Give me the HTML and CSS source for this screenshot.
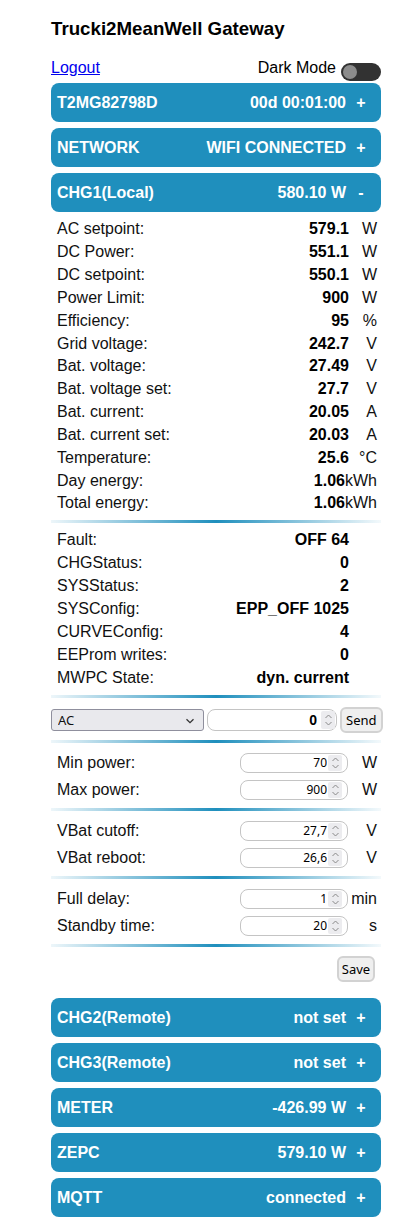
FILE: index.html
```html
<!DOCTYPE html>
<html lang="en">
<head>
<meta charset="utf-8">
<title>Trucki2MeanWell Gateway</title>
<link rel="stylesheet" href="styles.css">
</head>
<body>
<div class="page">
  <h1 class="title">Trucki2MeanWell Gateway</h1>
  <div class="header">
    <a class="logout" href="#">Logout</a>
    <div class="mode">
      <span class="mode-label">Dark Mode</span>
      <span class="toggle"><span class="knob"></span></span>
    </div>
  </div>

  <div class="bar"><span class="bar-title">T2MG82798D</span><span class="bar-value">00d 00:01:00</span><span class="bar-sign">+</span></div>
  <div class="bar"><span class="bar-title">NETWORK</span><span class="bar-value">WIFI CONNECTED</span><span class="bar-sign">+</span></div>
  <div class="bar"><span class="bar-title">CHG1(Local)</span><span class="bar-value">580.10 W</span><span class="bar-sign">-</span></div>

  <div class="data">
    <div class="row"><span class="label">AC setpoint:</span><span class="value">579.1</span><span class="unit">W</span></div>
    <div class="row"><span class="label">DC Power:</span><span class="value">551.1</span><span class="unit">W</span></div>
    <div class="row"><span class="label">DC setpoint:</span><span class="value">550.1</span><span class="unit">W</span></div>
    <div class="row"><span class="label">Power Limit:</span><span class="value">900</span><span class="unit">W</span></div>
    <div class="row"><span class="label">Efficiency:</span><span class="value">95</span><span class="unit">%</span></div>
    <div class="row"><span class="label">Grid voltage:</span><span class="value">242.7</span><span class="unit">V</span></div>
    <div class="row"><span class="label">Bat. voltage:</span><span class="value">27.49</span><span class="unit">V</span></div>
    <div class="row"><span class="label">Bat. voltage set:</span><span class="value">27.7</span><span class="unit">V</span></div>
    <div class="row"><span class="label">Bat. current:</span><span class="value">20.05</span><span class="unit">A</span></div>
    <div class="row"><span class="label">Bat. current set:</span><span class="value">20.03</span><span class="unit">A</span></div>
    <div class="row"><span class="label">Temperature:</span><span class="value">25.6</span><span class="unit">°C</span></div>
    <div class="row"><span class="label">Day energy:</span><span class="value">1.06</span><span class="unit">kWh</span></div>
    <div class="row"><span class="label">Total energy:</span><span class="value">1.06</span><span class="unit">kWh</span></div>
  </div>
  <div class="sep sep-a"></div>
  <div class="data status">
    <div class="row"><span class="label">Fault:</span><span class="value">OFF 64</span></div>
    <div class="row"><span class="label">CHGStatus:</span><span class="value">0</span></div>
    <div class="row"><span class="label">SYSStatus:</span><span class="value">2</span></div>
    <div class="row"><span class="label">SYSConfig:</span><span class="value">EPP_OFF 1025</span></div>
    <div class="row"><span class="label">CURVEConfig:</span><span class="value">4</span></div>
    <div class="row"><span class="label">EEProm writes:</span><span class="value">0</span></div>
    <div class="row"><span class="label">MWPC State:</span><span class="value">dyn. current</span></div>
  </div>
  <div class="sep sep-b"></div>
  <div class="cmd">
    <div class="select-wrap">
      <select class="cmd-select"><option>AC</option></select>
      <svg class="select-arrow" width="10" height="6" viewBox="0 0 10 6"><path d="M1.5 1.2 L5 4.6 L8.5 1.2" fill="none" stroke="#333" stroke-width="1.3"/></svg>
    </div>
    <div class="field cmd-field">
      <input class="field-input cmd-input" type="text" value="0">
      <span class="spin"><svg width="9" height="16" viewBox="0 0 9 16"><path d="M1.5 6 L4.5 3 L7.5 6" fill="none" stroke="#8a8a8a" stroke-width="1"/><path d="M1.5 10 L4.5 13 L7.5 10" fill="none" stroke="#8a8a8a" stroke-width="1"/></svg></span>
    </div>
    <button class="btn" type="button">Send</button>
  </div>
  <div class="sep sep-c"></div>
  <div class="form">
    <div class="frow"><span class="label">Min power:</span><div class="field"><input class="field-input" type="text" value="70"><span class="spin"><svg width="9" height="16" viewBox="0 0 9 16"><path d="M1.5 6 L4.5 3 L7.5 6" fill="none" stroke="#8a8a8a" stroke-width="1"/><path d="M1.5 10 L4.5 13 L7.5 10" fill="none" stroke="#8a8a8a" stroke-width="1"/></svg></span></div><span class="unit">W</span></div>
    <div class="frow"><span class="label">Max power:</span><div class="field"><input class="field-input" type="text" value="900"><span class="spin"><svg width="9" height="16" viewBox="0 0 9 16"><path d="M1.5 6 L4.5 3 L7.5 6" fill="none" stroke="#8a8a8a" stroke-width="1"/><path d="M1.5 10 L4.5 13 L7.5 10" fill="none" stroke="#8a8a8a" stroke-width="1"/></svg></span></div><span class="unit">W</span></div>
  </div>
  <div class="sep sep-c"></div>
  <div class="form">
    <div class="frow"><span class="label">VBat cutoff:</span><div class="field"><input class="field-input" type="text" value="27,7"><span class="spin"><svg width="9" height="16" viewBox="0 0 9 16"><path d="M1.5 6 L4.5 3 L7.5 6" fill="none" stroke="#8a8a8a" stroke-width="1"/><path d="M1.5 10 L4.5 13 L7.5 10" fill="none" stroke="#8a8a8a" stroke-width="1"/></svg></span></div><span class="unit">V</span></div>
    <div class="frow"><span class="label">VBat reboot:</span><div class="field"><input class="field-input" type="text" value="26,6"><span class="spin"><svg width="9" height="16" viewBox="0 0 9 16"><path d="M1.5 6 L4.5 3 L7.5 6" fill="none" stroke="#8a8a8a" stroke-width="1"/><path d="M1.5 10 L4.5 13 L7.5 10" fill="none" stroke="#8a8a8a" stroke-width="1"/></svg></span></div><span class="unit">V</span></div>
  </div>
  <div class="sep sep-c"></div>
  <div class="form">
    <div class="frow"><span class="label">Full delay:</span><div class="field"><input class="field-input" type="text" value="1"><span class="spin"><svg width="9" height="16" viewBox="0 0 9 16"><path d="M1.5 6 L4.5 3 L7.5 6" fill="none" stroke="#8a8a8a" stroke-width="1"/><path d="M1.5 10 L4.5 13 L7.5 10" fill="none" stroke="#8a8a8a" stroke-width="1"/></svg></span></div><span class="unit">min</span></div>
    <div class="frow"><span class="label">Standby time:</span><div class="field"><input class="field-input" type="text" value="20"><span class="spin"><svg width="9" height="16" viewBox="0 0 9 16"><path d="M1.5 6 L4.5 3 L7.5 6" fill="none" stroke="#8a8a8a" stroke-width="1"/><path d="M1.5 10 L4.5 13 L7.5 10" fill="none" stroke="#8a8a8a" stroke-width="1"/></svg></span></div><span class="unit">s</span></div>
  </div>
  <div class="sep sep-d"></div>
  <div class="save-row"><button class="btn btn-save" type="button">Save</button></div>

  <div class="bar"><span class="bar-title">CHG2(Remote)</span><span class="bar-value">not set</span><span class="bar-sign">+</span></div>
  <div class="bar"><span class="bar-title">CHG3(Remote)</span><span class="bar-value">not set</span><span class="bar-sign">+</span></div>
  <div class="bar"><span class="bar-title">METER</span><span class="bar-value">-426.99 W</span><span class="bar-sign">+</span></div>
  <div class="bar"><span class="bar-title">ZEPC</span><span class="bar-value">579.10 W</span><span class="bar-sign">+</span></div>
  <div class="bar"><span class="bar-title">MQTT</span><span class="bar-value">connected</span><span class="bar-sign">+</span></div>
</div>
</body>
</html>
```

FILE: styles.css
```css
html, body {
  margin: 0;
  padding: 0;
  background: #ffffff;
}

body {
  font-family: "Liberation Sans", Arial, sans-serif;
  color: #111111;
}

.page {
  width: 330px;
  padding: 18px 0 0 51px;
}

.title {
  margin: 0;
  font-size: 18.72px;
  line-height: 22px;
  font-weight: bold;
  color: #000000;
}

.header {
  margin-top: 19px;
  height: 24px;
  display: flex;
  justify-content: space-between;
  align-items: flex-start;
  font-size: 16px;
  line-height: 18px;
}

.logout {
  color: #0000ee;
  text-decoration: underline;
}

.mode {
  display: flex;
  align-items: flex-start;
  gap: 5px;
  color: #000000;
}

.toggle {
  margin-top: 4px;
  width: 40px;
  height: 18px;
  border-radius: 9px;
  background: #323232;
  display: flex;
  align-items: center;
  padding-left: 2px;
  box-sizing: border-box;
}

.knob {
  width: 14px;
  height: 14px;
  border-radius: 50%;
  background: #8c8c8c;
}

.bar {
  height: 39px;
  margin-bottom: 6px;
  background: #1f8fbd;
  border-radius: 8px;
  display: flex;
  align-items: center;
  padding: 0 15px 0 6px;
  color: #ffffff;
  font-weight: bold;
  font-size: 16px;
}

.bar-title {
  flex: 1;
}

.bar-sign {
  width: 10px;
  margin-left: 10px;
  text-align: center;
}

.data {
  font-size: 16px;
}

.row {
  height: 22.83px;
  display: flex;
  align-items: center;
  padding-left: 6px;
}

.status .row {
  height: 23px;
  padding-right: 32px;
}

.label {
  flex: 1;
}

.value {
  font-weight: bold;
  text-align: right;
  color: #000000;
}

.unit {
  min-width: 28px;
  padding-right: 4px;
  text-align: right;
  font-size: 16px;
}

.sep {
  height: 3px;
  background: linear-gradient(to right, rgba(31, 143, 189, 0.08), #1f8fbd 50%, rgba(31, 143, 189, 0.05));
}

.sep-a {
  margin: 5px 0 6px;
}

.sep-b {
  margin: 5px 0 9px;
}

.sep-c,
.sep-d {
  margin: 0;
}

.cmd {
  display: flex;
  align-items: center;
  height: 26px;
  margin-bottom: 7px;
}

.select-wrap {
  position: relative;
  width: 153px;
  height: 22px;
}

.cmd-select {
  -webkit-appearance: none;
  appearance: none;
  width: 153px;
  height: 22px;
  margin: 0;
  padding: 0 4px 0 6px;
  box-sizing: border-box;
  font-family: "Noto Sans", sans-serif;
  font-size: 13px;
  color: #111111;
  background-color: #e9e9ed;
  border: 1px solid #8f8f9d;
  border-radius: 3px;
}

.select-arrow {
  position: absolute;
  right: 9px;
  top: 9px;
  pointer-events: none;
}

.field {
  width: 108px;
  height: 20px;
  box-sizing: border-box;
  display: flex;
  align-items: stretch;
  border: 1px solid #c4c4c4;
  border-radius: 8px;
  background: #ffffff;
  padding: 1px 5px 1px 0;
  margin-right: 1px;
}

.field-input {
  flex: 1;
  min-width: 0;
  margin: 0;
  padding: 0 1px 0 4px;
  border: none;
  outline: none;
  background: transparent;
  text-align: right;
  font-family: "Noto Sans", sans-serif;
  font-size: 12px;
  color: #000000;
}

.spin {
  width: 14px;
  background: #ececef;
  border-radius: 2px;
  display: flex;
  align-items: center;
  justify-content: center;
}

.cmd-field {
  width: 130px;
  height: 22px;
  margin: 0 0 0 3px;
  padding: 1px 1px 1px 0;
}

.cmd-input {
  font-family: "Liberation Sans", Arial, sans-serif;
  font-weight: bold;
  font-size: 14px;
  padding-right: 4px;
}

.btn {
  margin: 0 0 0 3px;
  height: 26px;
  padding: 0 4px;
  font-family: "Noto Sans", sans-serif;
  font-size: 13px;
  color: #000000;
  background: #efefef;
  border: 2px solid #d2d2d2;
  border-radius: 6px;
}

.form {
  padding: 6.5px 0 4.5px;
}

.frow {
  height: 27px;
  display: flex;
  align-items: center;
  padding-left: 6px;
  font-size: 16px;
}

.save-row {
  display: flex;
  justify-content: flex-end;
  padding: 9.5px 6px 0 0;
  margin-bottom: 16px;
}

.btn-save {
  width: 38px;
  padding: 0;
}
```
